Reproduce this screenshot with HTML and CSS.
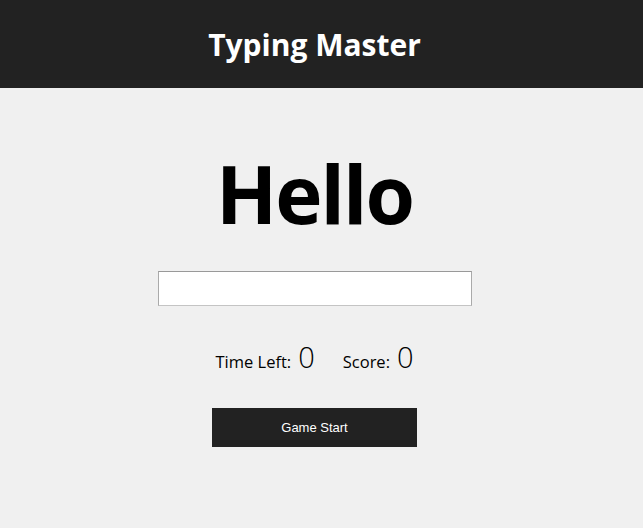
FILE: index.html
```html
<!DOCTYPE html>
<html>
<head>
<meta charset="utf-8">
<link rel="stylesheet" href="styles.css">
</head>
<body>
<header class="header">
  <h1 class="title">Typing Master</h1>
</header>
<main class="main">
  <div class="word">Hello</div>
  <input class="word-input" type="text">
  <div class="stats">
    <span class="label">Time Left:</span><span class="value">0</span>
    <span class="label score-label">Score:</span><span class="value">0</span>
  </div>
  <button class="start-btn">Game Start</button>
</main>
</body>
</html>
```
FILE: styles.css
```css
html, body {
  margin: 0;
  padding: 0;
  background: #f0f0f0;
  font-family: "Open Sans", "Noto Sans CJK KR", sans-serif;
}
.header {
  background: #222222;
  height: 88px;
  display: flex;
  align-items: center;
  justify-content: center;
  padding-right: 14px;
}
.title {
  margin: 0;
  color: #ffffff;
  font-size: 30px;
  font-weight: 700;
}
.main {
  display: flex;
  flex-direction: column;
  align-items: center;
  padding-right: 14px;
}
.word {
  margin-top: 57px;
  font-size: 80px;
  font-weight: 700;
  line-height: 96px;
  letter-spacing: -2px;
  color: #000;
}
.word-input {
  margin-top: 30px;
  width: 314px;
  height: 35px;
  box-sizing: border-box;
  border: 1px solid;
  border-color: #999 #aaa #c4c4c4 #aaa;
  background: #fff;
}
.stats {
  margin-top: 31px;
  display: flex;
  align-items: baseline;
  color: #000;
}
.label {
  font-size: 16.5px;
}
.value {
  font-size: 29px;
  font-weight: 300;
  margin-left: 7px;
}
.score-label {
  margin-left: 28px;
}
.start-btn {
  margin-top: 32px;
  width: 205px;
  height: 39px;
  background: #222222;
  color: #fff;
  border: 0;
  font-family: "Liberation Sans", Arial, sans-serif;
  font-size: 13px;
}
```
